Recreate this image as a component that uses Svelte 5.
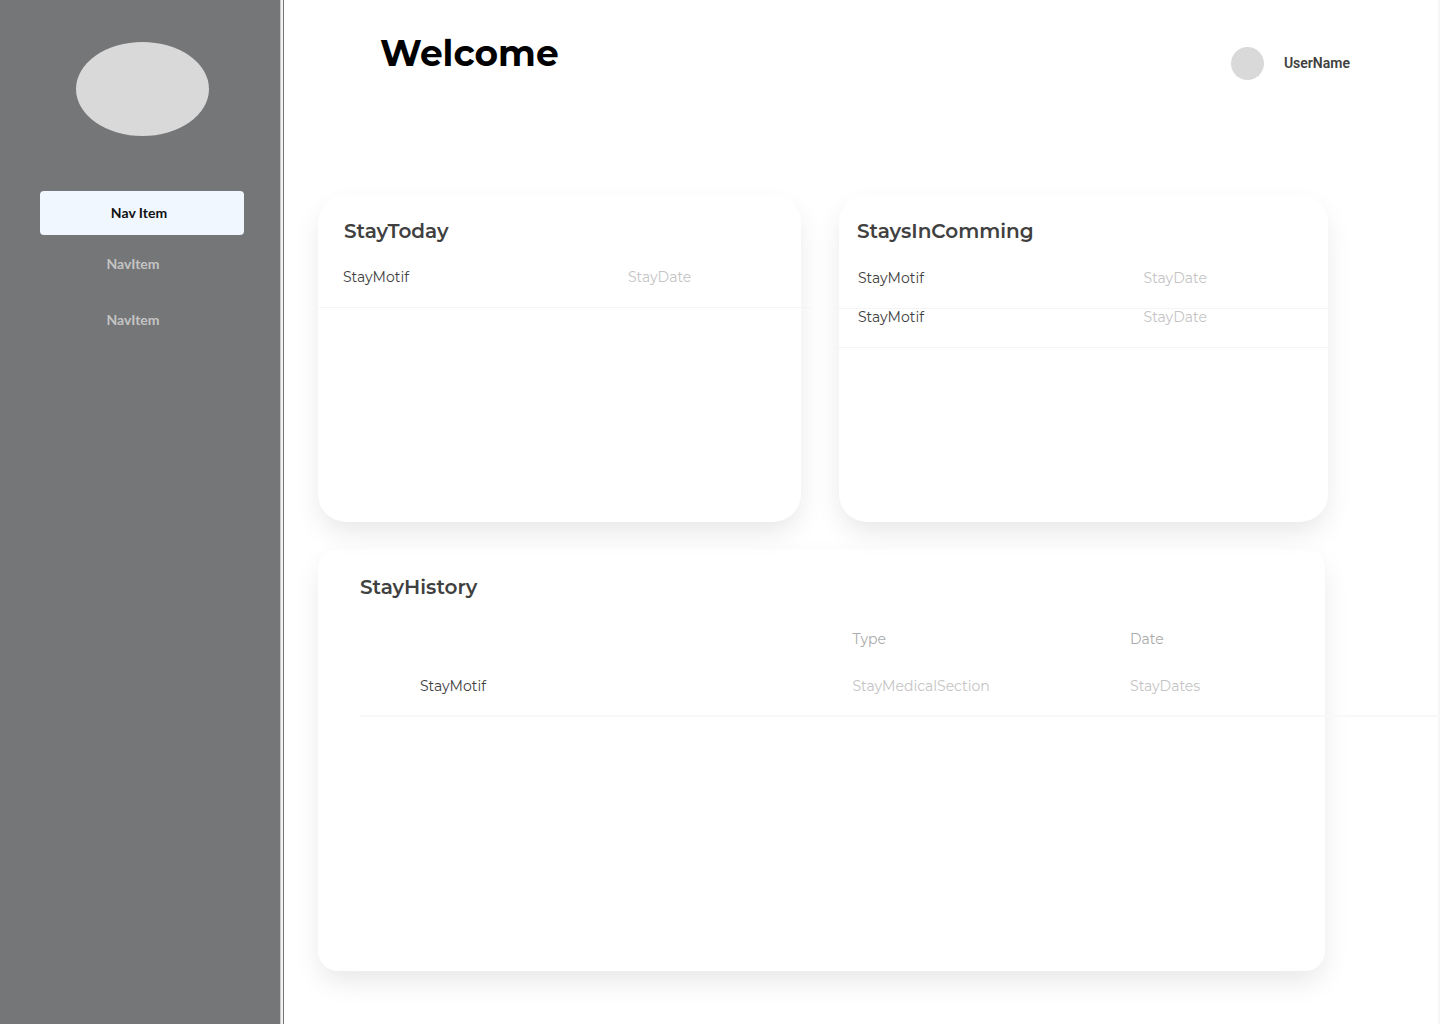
<script>
  const navItems = [
    { label: 'Nav Item', active: true },
    { label: 'NavItem', active: false },
    { label: 'NavItem', active: false },
  ];
  const today = [{ motif: 'StayMotif', date: 'StayDate' }];
  const incoming = [
    { motif: 'StayMotif', date: 'StayDate' },
    { motif: 'StayMotif', date: 'StayDate' },
  ];
  const history = [{ motif: 'StayMotif', section: 'StayMedicalSection', dates: 'StayDates' }];
</script>

{#snippet stayList(stays)}
  <ul class="stays">
    {#each stays as stay}
      <li>
        <span class="motif">{stay.motif}</span>
        <span class="date">{stay.date}</span>
      </li>
    {/each}
  </ul>
{/snippet}

<div class="app">
  <aside class="sidebar">
    <div class="logo"></div>
    <nav aria-label="Main">
      {#each navItems as item}
        <a href="#top" class:active={item.active} aria-current={item.active ? 'page' : undefined}>{item.label}</a>
      {/each}
    </nav>
  </aside>

  <main>
    <header>
      <h1>Welcome</h1>
      <div class="user">
        <span class="avatar"></span>
        <span class="name">UserName</span>
      </div>
    </header>

    <div class="cards">
      <section class="card today">
        <h2>StayToday</h2>
        {@render stayList(today)}
      </section>
      <section class="card incoming">
        <h2>StaysInComming</h2>
        {@render stayList(incoming)}
      </section>
    </div>

    <section class="card history">
      <h2>StayHistory</h2>
      <table>
        <thead>
          <tr>
            <th class="first" aria-label="Motif"></th>
            <th class="second">Type</th>
            <th>Date</th>
          </tr>
        </thead>
        <tbody>
          {#each history as stay}
            <tr>
              <td class="first motif">{stay.motif}</td>
              <td>{stay.section}</td>
              <td>{stay.dates}</td>
            </tr>
          {/each}
        </tbody>
      </table>
    </section>
  </main>
</div>

<style>
  :global(body) {
    margin: 0;
    background: #fff;
  }

  .app {
    display: flex;
    min-height: 100vh;
    overflow: hidden;
    font-family: Montserrat, Inter, sans-serif;
    color: #404040;
  }

  .app,
  .app * {
    box-sizing: border-box;
  }

  .sidebar {
    flex: 0 0 284px;
    padding: 42px 39px 0 40px;
    background: #747678;
    border-right: 1px solid #747678;
    box-shadow: inset -2px 0 #f2f2f2, inset -3px 0 #c8c8c8;
  }

  .logo {
    width: 133px;
    height: 94px;
    margin-left: 36px;
    border-radius: 50%;
    background: #d9d9d9;
  }

  nav {
    display: flex;
    flex-direction: column;
    gap: 12px;
    margin-top: 55px;
  }

  nav a {
    height: 44px;
    padding-right: 18px;
    border-radius: 4px;
    font: 700 14px/44px Lato, sans-serif;
    text-align: center;
    text-decoration: none;
    color: #c4c4c4;
  }

  nav a.active {
    margin-bottom: -5px;
    padding-right: 6px;
    background: #f0f7ff;
    color: #111;
  }

  main {
    flex: 1;
    min-width: 0;
    padding: 0 110px 53px 34px;
    border-right: 2px solid #f6f6f6;
  }

  header {
    display: flex;
    justify-content: space-between;
    height: 195px;
    margin-right: -22px;
    padding-left: 62px;
  }

  h1 {
    margin: 30px 0 0;
    font-size: 36px;
    font-weight: 700;
    line-height: 46px;
    color: #000;
  }

  .user {
    display: flex;
    align-items: center;
    gap: 20px;
    height: 33px;
    margin-top: 47px;
  }

  .avatar {
    width: 33px;
    height: 33px;
    border-radius: 50%;
    background: #d9d9d9;
  }

  .name {
    padding-bottom: 2px;
    font: 600 14px/20px Roboto, sans-serif;
  }

  .cards {
    display: grid;
    grid-template-columns: 483fr 489fr;
    gap: 38px;
  }

  .card {
    min-height: 327px;
    padding-top: 22px;
    border-radius: 28px;
    background: #fff;
    box-shadow: 0 12px 28px -3px rgba(0, 0, 0, 0.1);
  }

  h2 {
    margin: 0;
    font-size: 20px;
    font-weight: 600;
    line-height: 28px;
  }

  .today h2 {
    padding-left: 26px;
  }

  .incoming h2 {
    padding-left: 18px;
  }

  .stays {
    position: relative;
    z-index: 1;
    margin: 24px 0 0;
    padding: 0;
    list-style: none;
    font-size: 14px;
    font-weight: 400;
    line-height: 16px;
  }

  .today .stays {
    margin-left: 1px;
    margin-right: -11px;
  }

  .incoming .stays {
    margin-top: 25px;
    margin-left: -5px;
  }

  .stays li {
    display: grid;
    grid-template-columns: 285fr 184fr;
    height: 39px;
    padding-left: 24px;
    border-bottom: 1px solid #f4f4f4;
  }

  .date {
    color: #c4c4c4;
  }

  .history {
    min-height: 422px;
    margin: 27px 3px 0 0;
    padding: 24px 0 0 42px;
    border-radius: 20px;
  }

  table {
    width: calc(100% + 115px);
    margin-top: 29px;
    border-collapse: collapse;
    table-layout: fixed;
    font-size: 14px;
    line-height: 18px;
  }

  th,
  td {
    padding: 0;
    font-weight: 400;
    text-align: left;
    vertical-align: top;
  }

  th {
    height: 47px;
    color: #aaa;
  }

  td {
    height: 39px;
    border-bottom: 2px solid #f9f9f9;
    color: #c4c4c4;
  }

  .first {
    width: 45.6%;
    padding-left: 60px;
  }

  .second {
    width: 25.7%;
  }

  .motif {
    color: #404040;
  }
</style>
